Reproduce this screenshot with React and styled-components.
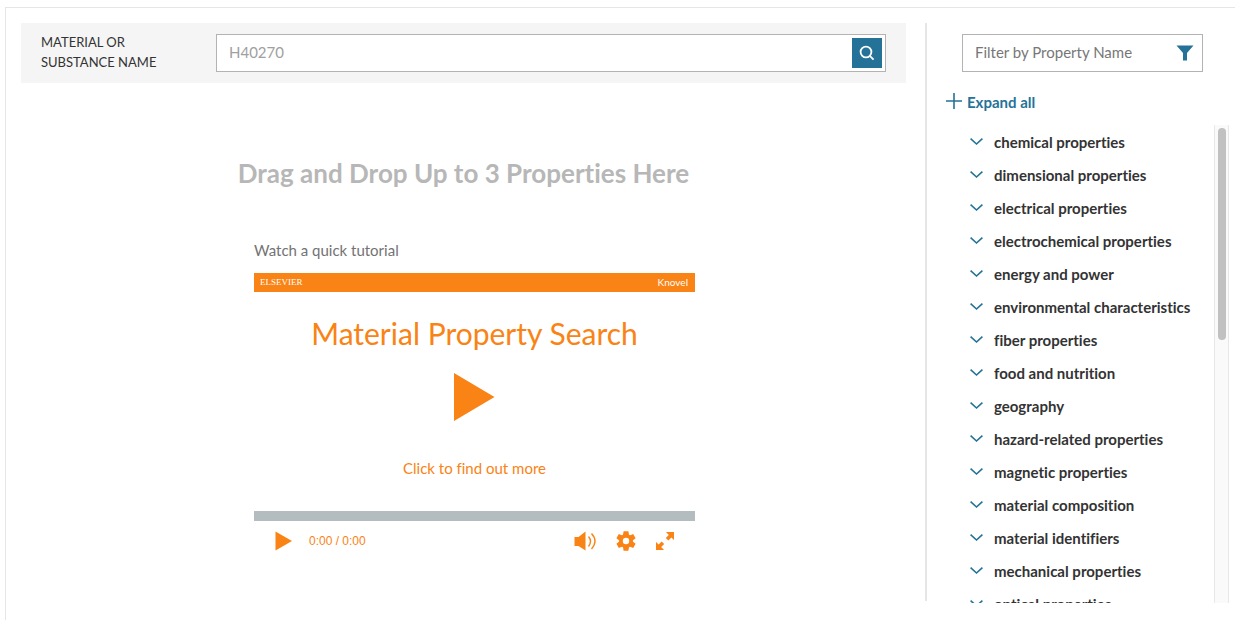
import React, { useState } from "react";
import styled, { createGlobalStyle } from "styled-components";

const blue = "#247298";
const orange = "#f98314";

const GlobalStyle = createGlobalStyle`
  * {
    box-sizing: border-box;
  }
  body {
    margin: 0;
    background-color: white;
    color: #333;
    font-family: Lato, "Open Sans", sans-serif;
    font-size: 15px;
    font-variant-ligatures: none;
    line-height: 20px;
  }
  button,
  input {
    font: inherit;
    font-variant-ligatures: none;
    color: inherit;
  }
  button {
    padding: 0;
    border: none;
    background: none;
    cursor: pointer;
  }
  svg {
    display: block;
  }
`;

const Page = styled.div`
  display: flex;
  height: calc(100vh - 7px);
  margin: 7px 0 0 5px;
  padding: 15px 0 17px 15px;
  border-top: 1px solid #e6e6e6;
  border-left: 1px solid #e6e6e6;
`;

const Main = styled.main`
  flex: 1;
  min-width: 0;
`;

const Divider = styled.div`
  width: 2px;
  margin: 0 0 2px 19px;
  background-color: #e6e6e6;
`;

const SearchBar = styled.form`
  display: flex;
  align-items: center;
  height: 60px;
  padding: 0 20px;
  background-color: #f5f5f5;
`;

const SearchLabel = styled.label`
  width: 175px;
  padding-bottom: 2px;
  font-size: 13px;
  text-transform: uppercase;
`;

const Field = styled.div`
  display: flex;
  align-items: center;
  flex: 1;
  height: 38px;
  padding-right: 3px;
  border: 1px solid #b3b3b3;
  background-color: white;
`;

const FieldInput = styled.input`
  flex: 1;
  min-width: 0;
  height: 34px;
  padding: 0 12px 2px;
  border: none;
  outline: none;
  background: none;

  &::placeholder {
    color: ${(props) => props.$hint};
    opacity: 1;
  }
`;

const SearchButton = styled.button`
  display: grid;
  place-items: center;
  width: 30px;
  height: 30px;
  background-color: ${blue};
`;

const FilterButton = styled.button`
  padding-right: 5px;
`;

const DropArea = styled.h1`
  margin: 74px 0 51px;
  color: #b7b7b7;
  font-size: 26px;
  line-height: 32px;
  text-align: center;
`;

const Tutorial = styled.section`
  width: 463px;
  max-width: 100%;
  margin: 0 auto;
  padding-left: 22px;
  box-sizing: border-box;
`;

const TutorialHint = styled.p`
  margin: 0 0 13px;
  color: #737373;
`;

const PlayerHeader = styled.div`
  display: flex;
  justify-content: space-between;
  height: 19px;
  padding: 0 7px 0 6px;
  background-color: ${orange};
  color: white;
  font-size: 10px;
  line-height: 19px;
`;

const Publisher = styled.span`
  font-family: "Liberation Serif", serif;
  font-size: 9px;
`;

const Poster = styled.button`
  display: flex;
  flex-direction: column;
  align-items: center;
  width: 100%;
  height: 219px;
  padding-top: 20px;
  color: ${orange};
`;

const PosterTitle = styled.span`
  font-size: 30px;
  line-height: 42px;
`;

const BigPlay = styled.svg`
  margin: 19px 0 37px;
`;

const Progress = styled.div`
  height: 10px;
  background-color: #b3bcbe;
`;

const Controls = styled.div`
  display: flex;
  align-items: center;
  height: 40px;
  padding: 0 20px 0 21px;
  color: ${orange};
`;

const Time = styled.span`
  flex: 1;
  margin-left: 17px;
  font-family: "Liberation Sans", sans-serif;
  font-size: 12px;
`;

const ControlGroup = styled.div`
  display: flex;
  align-items: center;
  gap: 19px;
`;

const Sidebar = styled.aside`
  display: flex;
  flex-direction: column;
  width: 308px;
`;

const Filter = styled(Field)`
  flex: none;
  margin: 11px 32px 0 35px;
`;

const ExpandAll = styled.button`
  display: flex;
  align-items: center;
  align-self: flex-start;
  gap: 5px;
  margin: 20px 0 13px 19px;
  color: ${blue};
  font-weight: bold;
`;

const ListArea = styled.div`
  display: flex;
  flex: 1;
  min-height: 0;
  margin-right: 6px;
`;

const List = styled.ul`
  flex: 1;
  margin: 0;
  padding: 0 0 0 43px;
  overflow: auto;
  list-style: none;
  scrollbar-width: none;
`;

const Item = styled.button`
  display: flex;
  align-items: center;
  gap: 11px;
  height: 33px;
  font-weight: bold;
  white-space: nowrap;
`;

const Track = styled.div`
  width: 15px;
  padding: 3px;
  border: 1px solid #e8e8e8;
  border-width: 0 1px;
  background-color: #fafafa;
`;

const Thumb = styled.div`
  width: 8px;
  height: 45%;
  border-radius: 4px;
  background-color: #c1c1c1;
`;

const categories = [
  "chemical properties",
  "dimensional properties",
  "electrical properties",
  "electrochemical properties",
  "energy and power",
  "environmental characteristics",
  "fiber properties",
  "food and nutrition",
  "geography",
  "hazard-related properties",
  "magnetic properties",
  "material composition",
  "material identifiers",
  "mechanical properties",
  "optical properties",
];

function SearchIcon() {
  return (
    <svg width="16" height="16" viewBox="0 0 16 16" fill="none" stroke="white" strokeWidth="1.8">
      <circle cx="7" cy="7" r="5.4" />
      <path d="M10.8 10.8L14.6 14.6" />
    </svg>
  );
}

function FunnelIcon() {
  return (
    <svg width="18" height="16" viewBox="0 0 18 16" fill={blue}>
      <path d="M0.5 0.5H17.5L11 8V15.5H7V8Z" />
    </svg>
  );
}

function PlusIcon() {
  return (
    <svg width="16" height="18" viewBox="0 0 16 18" stroke={blue} strokeWidth="1.6">
      <path d="M8 0V16M0 8H16" />
    </svg>
  );
}

function ChevronIcon() {
  return (
    <svg width="13" height="8" viewBox="0 0 13 8" fill="none" stroke={blue} strokeWidth="1.6">
      <path d="M0.6 0.6L6.5 6L12.4 0.6" />
    </svg>
  );
}

function VolumeIcon() {
  return (
    <svg width="23" height="20" viewBox="0 0 23 20" fill={orange}>
      <path d="M0.5 6H4.5L11.5 0.5V19.5L4.5 15H0.5Z" />
      <path d="M14.5 5.5Q18.5 10 14.5 15.5M17.5 2.5Q24.5 10 17.5 18" fill="none" stroke={orange} strokeWidth="1.4" />
    </svg>
  );
}

function GearIcon() {
  return (
    <svg width="20" height="20" viewBox="0 0 20 20">
      <g fill={orange}>
        {[0, 60, 120].map((angle) => (
          <path key={angle} d="M7.6 0.3H12.4L13 4V16L12.4 19.7H7.6L7 16V4Z" transform={`rotate(${angle} 10 10)`} />
        ))}
        <circle cx="10" cy="10" r="7" />
      </g>
      <circle cx="10" cy="10" r="3.2" fill="white" />
    </svg>
  );
}

function FullscreenIcon() {
  return (
    <svg width="20" height="20" viewBox="0 0 20 20" fill={orange}>
      <path d="M11 1H19V9L16.4 6.6L13.4 9.6L10.8 7L13.8 4Z" />
      <path d="M9 19H1V11L3.6 13.4L6.6 10.4L9.2 13L6.2 16Z" />
    </svg>
  );
}

export default function App() {
  const [filter, setFilter] = useState("");
  const shown = categories.filter((name) => name.includes(filter.toLowerCase()));

  return (
    <Page>
      <GlobalStyle />
      <Main>
        <SearchBar onSubmit={(e) => e.preventDefault()}>
          <SearchLabel htmlFor="material">
            Material or
            <br />
            substance name
          </SearchLabel>
          <Field>
            <FieldInput id="material" placeholder="H40270" $hint="#a0a0a0" />
            <SearchButton type="submit" aria-label="Search">
              <SearchIcon />
            </SearchButton>
          </Field>
        </SearchBar>
        <DropArea>Drag and Drop Up to 3 Properties Here</DropArea>
        <Tutorial>
          <TutorialHint>Watch a quick tutorial</TutorialHint>
          <PlayerHeader>
            <Publisher>ELSEVIER</Publisher>
            <span>Knovel</span>
          </PlayerHeader>
          <Poster type="button">
            <PosterTitle>Material Property Search</PosterTitle>
            <BigPlay width="42" height="48" viewBox="0 0 42 48" fill={orange}>
              <path d="M0 0L40.5 24L0 48Z" />
            </BigPlay>
            <span>Click to find out more</span>
          </Poster>
          <Progress />
          <Controls>
            <button type="button" aria-label="Play">
              <svg width="17" height="20" viewBox="0 0 17 20" fill={orange}>
                <path d="M0.5 0.5L17 10L0.5 19.5Z" />
              </svg>
            </button>
            <Time>0:00 / 0:00</Time>
            <ControlGroup>
              <button type="button" aria-label="Volume">
                <VolumeIcon />
              </button>
              <button type="button" aria-label="Settings">
                <GearIcon />
              </button>
              <button type="button" aria-label="Full screen">
                <FullscreenIcon />
              </button>
            </ControlGroup>
          </Controls>
        </Tutorial>
      </Main>
      <Divider />
      <Sidebar>
        <Filter>
          <FieldInput
            aria-label="Filter by Property Name"
            placeholder="Filter by Property Name"
            $hint="#777"
            value={filter}
            onChange={(e) => setFilter(e.target.value)}
          />
          <FilterButton type="button" aria-label="Filter">
            <FunnelIcon />
          </FilterButton>
        </Filter>
        <ExpandAll type="button">
          <PlusIcon />
          Expand all
        </ExpandAll>
        <ListArea>
          <List>
            {shown.map((name) => (
              <li key={name}>
                <Item type="button">
                  <ChevronIcon />
                  {name}
                </Item>
              </li>
            ))}
          </List>
          <Track>
            <Thumb />
          </Track>
        </ListArea>
      </Sidebar>
    </Page>
  );
}
